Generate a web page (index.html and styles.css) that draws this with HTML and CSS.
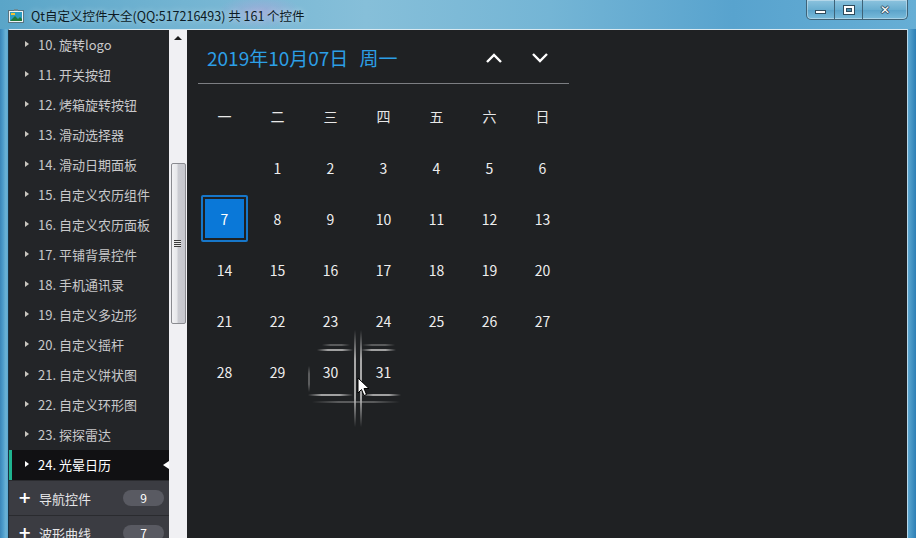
FILE: index.html
```html
<!DOCTYPE html>
<html lang="zh">
<head>
<meta charset="utf-8">
<title>Qt自定义控件大全</title>
<link rel="stylesheet" href="styles.css">
</head>
<body>
<div class="window">
  <header class="titlebar">
    <svg class="app-icon" width="16" height="14" viewBox="0 0 16 14">
      <rect x="0.5" y="1.5" width="15" height="12" fill="#eef4f6" stroke="#5a7480"/>
      <rect x="2" y="3" width="12" height="9" fill="#2c9bc0"/>
      <path d="M2 12 L7 7 L10 10 L12 8 L14 10 L14 12 Z" fill="#1f7a3a"/>
      <rect x="3" y="4" width="4" height="2" fill="#f2c230"/>
      <rect x="6" y="0" width="4" height="2" fill="#6a8a96"/>
    </svg>
    <span class="title">Qt自定义控件大全(QQ:517216493) 共 161 个控件</span>
    <div class="controls">
      <div class="ctl ctl-min"><span class="glyph-min"></span></div>
      <div class="ctl ctl-max"><span class="glyph-max"></span></div>
      <div class="ctl ctl-close"><span class="glyph-close">✕</span></div>
    </div>
  </header>
  <div class="client">
    <aside class="sidebar">
      <div class="nav">
        <ul class="items">
          <li class="item">10. 旋转logo</li>
          <li class="item">11. 开关按钮</li>
          <li class="item">12. 烤箱旋转按钮</li>
          <li class="item">13. 滑动选择器</li>
          <li class="item">14. 滑动日期面板</li>
          <li class="item">15. 自定义农历组件</li>
          <li class="item">16. 自定义农历面板</li>
          <li class="item">17. 平铺背景控件</li>
          <li class="item">18. 手机通讯录</li>
          <li class="item">19. 自定义多边形</li>
          <li class="item">20. 自定义摇杆</li>
          <li class="item">21. 自定义饼状图</li>
          <li class="item">22. 自定义环形图</li>
          <li class="item">23. 探探雷达</li>
          <li class="item active">24. 光晕日历</li>
        </ul>
        <div class="group"><span class="plus">+</span><span class="gname">导航控件</span><span class="badge">9</span></div>
        <div class="group"><span class="plus">+</span><span class="gname">波形曲线</span><span class="badge">7</span></div>
      </div>
      <div class="scrollbar">
        <div class="sb-arrow"></div>
        <div class="sb-thumb"><span class="grip"></span></div>
      </div>
    </aside>
    <main class="calendar">
      <div class="cal">
        <div class="cal-head">
          <span class="cal-date">2019年10月07日<span class="week">周一</span></span>
          <div class="arrows">
            <svg width="18" height="12" viewBox="0 0 18 12"><path d="M2 10 L9 3 L16 10" fill="none" stroke="#fff" stroke-width="2.4"/></svg>
            <svg width="18" height="12" viewBox="0 0 18 12"><path d="M2 2 L9 9 L16 2" fill="none" stroke="#fff" stroke-width="2.4"/></svg>
          </div>
        </div>
        <div class="grid">
          <div class="wd">一</div><div class="wd">二</div><div class="wd">三</div><div class="wd">四</div><div class="wd">五</div><div class="wd">六</div><div class="wd">日</div>
          <div class="day"></div><div class="day">1</div><div class="day">2</div><div class="day">3</div><div class="day">4</div><div class="day">5</div><div class="day">6</div>
          <div class="day sel"><span class="sel-box">7</span></div><div class="day">8</div><div class="day">9</div><div class="day">10</div><div class="day">11</div><div class="day">12</div><div class="day">13</div>
          <div class="day">14</div><div class="day">15</div><div class="day">16</div><div class="day">17</div><div class="day">18</div><div class="day">19</div><div class="day">20</div>
          <div class="day">21</div><div class="day">22</div><div class="day">23</div><div class="day">24</div><div class="day">25</div><div class="day">26</div><div class="day">27</div>
          <div class="day">28</div><div class="day">29</div><div class="day">30</div><div class="day">31</div>
        </div>
      </div>
      <div class="glow">
        <span class="ln v" style="left:167px;top:300px;height:97px"></span>
        <span class="ln v" style="left:173px;top:300px;height:97px"></span>
        <span class="ln h faint" style="left:135px;top:314px;width:28px"></span>
        <span class="ln h faint" style="left:175px;top:314px;width:33px"></span>
        <span class="ln h" style="left:130px;top:319px;width:36px"></span>
        <span class="ln h" style="left:174px;top:319px;width:35px"></span>
        <span class="ln h" style="left:121px;top:364px;width:45px"></span>
        <span class="ln h" style="left:174px;top:364px;width:40px"></span>
        <span class="ln h faint" style="left:125px;top:371px;width:88px"></span>
        <span class="ln v faint" style="left:121px;top:336px;height:26px"></span>
        <svg class="cursor" width="13" height="20" viewBox="0 0 13 20">
          <path d="M1 1 L1 16 L4.5 12.5 L7 18.5 L9.5 17.5 L7 11.5 L12 11.5 Z" fill="#fff" stroke="#000" stroke-width="1" stroke-linejoin="round"/>
        </svg>
      </div>
    </main>
  </div>
</div>
</body>
</html>
```

FILE: styles.css
```css
* { box-sizing: border-box; }
html, body { margin: 0; padding: 0; }
body {
  width: 916px;
  height: 538px;
  overflow: hidden;
  font-family: "Noto Sans CJK SC", "Noto Sans", sans-serif;
  background: #3a86b4;
}
.window {
  width: 916px;
  height: 538px;
  display: flex;
  flex-direction: column;
  background: linear-gradient(90deg, #3b86b8 0px, #4c9ccb 3px, #6bb3d6 6px, #5aa6cf 8px, #5aa6cf 908px, #4a98c6 911px, #2d7fb6 916px);
  padding: 0 8px 0 8px;
}
.titlebar {
  height: 29px;
  width: 916px;
  flex: none;
  display: flex;
  align-items: center;
  margin: 0 -8px;
  padding: 0 8px 0 8px;
  position: relative;
  background:
    radial-gradient(ellipse 60px 24px at 260px 12px, rgba(190,160,220,0.5), rgba(190,160,220,0) 70%),
    linear-gradient(90deg, #5aa5c8 0%, #73b4d2 20%, #86bfd9 40%, #74b5d5 60%, #58a3ce 80%, #66aed5 100%);
}
.app-icon { margin-top: 2px; flex: none; }
.title {
  margin-left: 7px;
  font-size: 12.5px;
  color: #0b1a24;
  text-shadow: 0 0 6px rgba(255,255,255,0.6);
  margin-top: 1px;
  white-space: nowrap;
}
.controls {
  position: absolute;
  top: 0;
  right: 8px;
  display: flex;
  height: 20px;
  border: 1px solid #3e6378;
  border-top: none;
  border-radius: 0 0 5px 5px;
  overflow: hidden;
  background: linear-gradient(#8cc3de, #6aaed0 50%, #5aa2c9 51%, #79bbdb);
  box-shadow: inset 0 0 0 1px rgba(255,255,255,0.35);
}
.ctl {
  height: 19px;
  flex: none;
  display: flex;
  align-items: center;
  justify-content: center;
  border-right: 1px solid #3e6378;
}
.ctl:last-child { border-right: none; }
.ctl-min { width: 28px; }
.ctl-max { width: 28px; }
.ctl-close { width: 44px; }
.glyph-min {
  width: 11px; height: 4px; background: #fff; border: 1px solid #2f4b5c; margin-top: 5px;
}
.glyph-max {
  width: 12px; height: 10px; border: 1px solid #2f4b5c;
  box-shadow: inset 0 0 0 2px #fff, inset 0 0 0 3px #2f4b5c;
  background: #4c8fb0;
}
.glyph-close {
  color: #fff; font-size: 12px; font-weight: bold; line-height: 1;
  text-shadow: 1px 0 0 #2f4b5c, -1px 0 0 #2f4b5c, 0 1px 0 #2f4b5c, 0 -1px 0 #2f4b5c;
  font-family: "DejaVu Sans", sans-serif;
}
.client {
  flex: 1;
  display: flex;
  border-top: 1px solid #d8e8f0;
  border-left: 1px solid #1a3040;
  border-right: 1px solid #b8d8ea;
  min-height: 0;
  overflow: hidden;
}
.sidebar {
  width: 178px;
  flex: none;
  display: flex;
  height: 100%;
}
.nav {
  width: 160px;
  flex: none;
  background: #232528;
  overflow: hidden;
}
.items { list-style: none; margin: 0; padding: 0; }
.item {
  height: 30px;
  line-height: 30px;
  padding-left: 29px;
  font-size: 13px;
  color: #c8c8ca;
  position: relative;
  white-space: nowrap;
}
.item::before {
  content: "";
  position: absolute;
  left: 16px;
  top: 11px;
  border-left: 4px solid #c9c6c0;
  border-top: 3.5px solid transparent;
  border-bottom: 3.5px solid transparent;
}
.item.active {
  background: #111113;
  color: #ffffff;
  box-shadow: inset 3px 0 0 #1fb38f;
}
.item.active::before { border-left-color: #ffffff; }
.item.active::after {
  content: "";
  position: absolute;
  right: 0;
  top: 11px;
  border-right: 6px solid #ffffff;
  border-top: 4px solid transparent;
  border-bottom: 4px solid transparent;
}
.group {
  height: 35px;
  display: flex;
  align-items: center;
  background: #3b3c42;
  border-top: 1px solid #2a2b2f;
  color: #ffffff;
  font-size: 13px;
  padding-left: 9px;
}
.plus {
  font-size: 16px;
  font-weight: bold;
  width: 12px;
  line-height: 1;
  font-family: "DejaVu Sans", sans-serif;
  text-align: center;
}
.gname { margin-left: 9px; flex: 1; color: #e6e6e8; }
.badge {
  width: 41px;
  height: 16px;
  border-radius: 8px;
  background: #595a62;
  color: #fff;
  font-size: 12px;
  line-height: 16px;
  text-align: center;
  margin-right: 5px;
}
.scrollbar {
  width: 18px;
  flex: none;
  background: #f0f0f3;
  display: flex;
  flex-direction: column;
  align-items: center;
}
.sb-arrow {
  margin-top: 6px;
  border-bottom: 4px solid #1c1c1c;
  border-left: 4px solid transparent;
  border-right: 4px solid transparent;
}
.sb-thumb {
  margin-top: 123px;
  width: 15px;
  height: 161px;
  border: 1px solid #8a8b90;
  border-radius: 2px;
  background: linear-gradient(90deg, #f2f2f4 0%, #e6e7ea 40%, #cbccd2 45%, #c6c7cd 100%);
  display: flex;
  align-items: center;
  justify-content: center;
}
.grip {
  width: 7px;
  height: 7px;
  background: repeating-linear-gradient(#3a3a3a 0 1px, #e8e8e8 1px 2px);
  margin-left: -2px;
}
.calendar {
  flex: 1;
  background: #1f2123;
  position: relative;
  padding-left: 11px;
}
.cal { width: 371px; }
.cal-head {
  height: 54px;
  border-bottom: 1px solid #7c7e82;
  display: flex;
  align-items: center;
  padding-left: 9px;
  padding-top: 1px;
}
.cal-date {
  color: #2c9fe6;
  font-size: 19px;
  flex: 1;
  white-space: nowrap;
}
.week { margin-left: 11px; }
.arrows {
  display: flex;
  gap: 28px;
  margin-right: 20px;
  margin-top: 2px;
}
.grid {
  display: grid;
  grid-template-columns: repeat(7, 53px);
  grid-template-rows: 53px repeat(5, 51px);
  margin-top: 5px;
}
.wd, .day {
  display: flex;
  align-items: center;
  justify-content: center;
  color: #eeeeee;
  font-size: 14px;
}
.wd { color: #e8e8e8; }
.sel-box {
  width: 47px;
  height: 47px;
  border: 2px solid #1777c9;
  border-radius: 2px;
  display: flex;
  align-items: center;
  justify-content: center;
  color: #fff;
  font-size: 14px;
  box-shadow: inset 0 0 0 2px #1f2123, inset 0 0 0 30px #0a78d8;
}
.glow {
  position: absolute;
  left: 0; top: 0;
  width: 0; height: 0;
}
.ln { position: absolute; display: block; }
.ln.v {
  width: 2px;
  background: linear-gradient(rgba(150,150,150,0), rgba(175,175,175,0.95) 30%, rgba(175,175,175,0.95) 70%, rgba(150,150,150,0));
}
.ln.h {
  height: 2px;
  background: linear-gradient(90deg, rgba(150,150,150,0), rgba(175,175,175,0.9) 30%, rgba(175,175,175,0.9) 70%, rgba(150,150,150,0));
}
.ln.faint { opacity: 0.45; }
.cursor { position: absolute; left: 170px; top: 347px; }
```
